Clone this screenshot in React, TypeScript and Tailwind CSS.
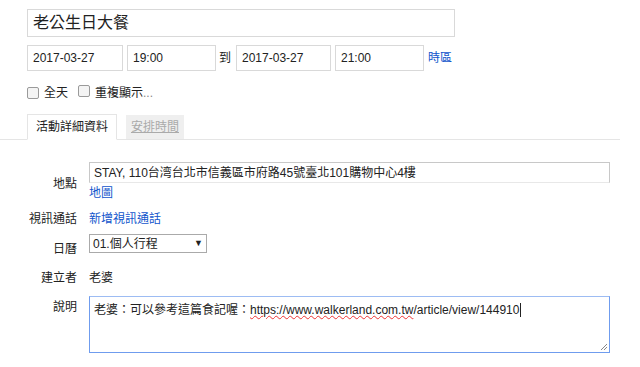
const FONT = '"Liberation Sans", "Noto Sans CJK TC", Arial, sans-serif'

function Field({ value, w }: { value: string; w: string }) {
  return (
    <div className={`flex h-[26px] items-center border border-[#d9d9d9] bg-white px-[5px] text-[12px] text-[#222] ${w}`}>
      {value}
    </div>
  )
}

function Box() {
  return <span className="inline-block h-[12px] w-[12px] rounded-[2px] border border-[#9a9a9a] bg-[#f4f4f4]" />
}

export default function App() {
  return (
    <div className="h-[367px] w-[640px] overflow-hidden bg-white text-[13px] text-[#222]" style={{ fontFamily: FONT }}>
      <div className="pl-[27px] pt-[9px]">
        {/* Title */}
        <div className="flex h-[28px] w-[428px] items-center border border-[#d9d9d9] px-[5px] text-[16px] text-[#222]">
          老公生日大餐
        </div>

        {/* Dates */}
        <div className="mt-[8px] flex items-center">
          <Field value="2017-03-27" w="w-[96px]" />
          <div className="w-[4px]" />
          <Field value="19:00" w="w-[89px]" />
          <span className="ml-[3px] mr-[5px] text-[12px]">到</span>
          <Field value="2017-03-27" w="w-[95px]" />
          <div className="w-[4px]" />
          <Field value="21:00" w="w-[89px]" />
          <a className="ml-[4px] text-[12px] text-[#1155cc]">時區</a>
        </div>

        {/* Checkboxes */}
        <div className="mt-[13px] flex items-center text-[12px] text-[#222]">
          <Box />
          <span className="ml-[5px]">全天</span>
          <span className="ml-[10px]"><Box /></span>
          <span className="ml-[5px]">重複顯示<span className="text-[#888]">...</span></span>
        </div>
      </div>

      {/* Tabs */}
      <div className="mt-[12px] flex w-[620px] items-end border-b border-[#e5e5e5] pl-[27px]">
        <div className="-mb-px flex h-[26px] w-[90px] items-center justify-center border border-b-white border-[#e5e5e5] bg-white text-[12px] text-[#222]">
          活動詳細資料
        </div>
        <div className="ml-[9px] flex h-[24px] w-[58px] items-center justify-center bg-[#efefef] text-[12px] text-[#aaa] underline">
          安排時間
        </div>
      </div>

      {/* Details */}
      <div className="mt-[22px] grid w-[610px] grid-cols-[77px_1fr] gap-x-[12px]">
        <div className="pt-[13px] text-right text-[12px]">地點</div>
        <div>
          <div className="flex h-[21px] items-center border border-[#c8c8c8] border-b-[#e8e8e8] px-[4px] text-[12px]">
            STAY, 110台湾台北市信義區市府路45號臺北101購物中心4樓
          </div>
          <a className="mt-[1px] block text-[12px] text-[#1155cc]">地圖</a>
        </div>

        <div className="mt-[8px] text-right text-[12px]">視訊通話</div>
        <a className="mt-[8px] text-[12px] text-[#1155cc]">新增視訊通話</a>

        <div className="mt-[12px] text-right text-[12px]">日曆</div>
        <div className="mt-[6px]">
          <div className="flex h-[19px] w-[118px] items-center justify-between border border-[#aaa] px-[3px] text-[12px]">
            <span>01.個人行程</span>
            <span className="text-[9px]">▼</span>
          </div>
        </div>

        <div className="mt-[11px] text-right text-[12px]">建立者</div>
        <div className="mt-[11px] text-[12px]">老婆</div>

        <div className="mt-[11px] text-right text-[12px]">說明</div>
        <div className="relative mt-[9px] h-[57px] border border-[#6f9cee] border-t-[#9dbcf3] bg-white px-[4px] pt-[3px] text-[12px]">
          老婆：可以參考這篇食記喔：
          <span className="underline decoration-[#e33] decoration-wavy decoration-1">https://www.walkerland.com.tw</span>
          /article/view/144910
          <span className="ml-px inline-block h-[14px] w-px translate-y-[3px] bg-[#222]" />
          <svg className="absolute bottom-[1px] right-[1px]" width="8" height="8" viewBox="0 0 8 8">
            <path d="M7 1L1 7M7 4L4 7" stroke="#888" strokeWidth="1" />
          </svg>
        </div>
      </div>
    </div>
  )
}
